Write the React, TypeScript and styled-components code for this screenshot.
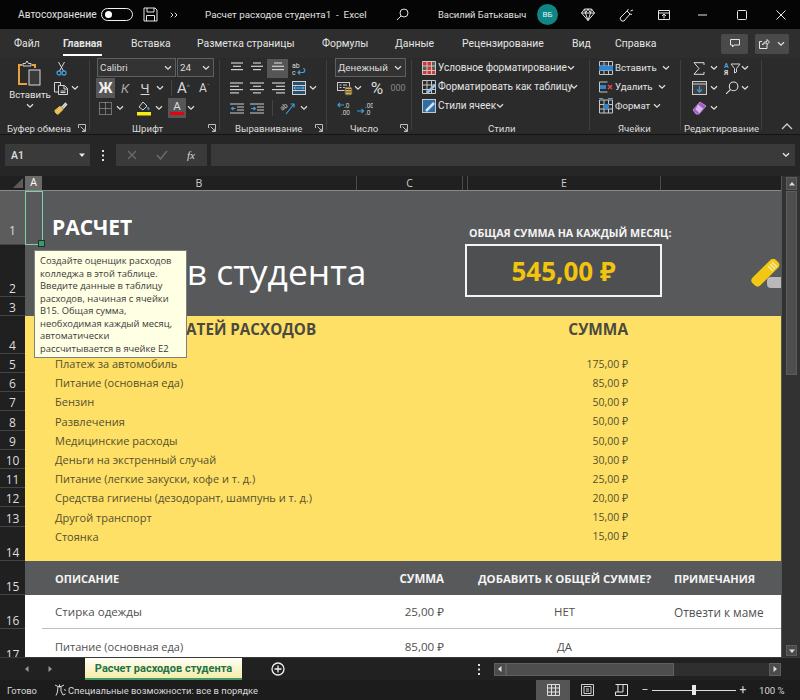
import React from "react";
import styled, { createGlobalStyle } from "styled-components";

const UI = `"Roboto", "Open Sans", sans-serif`;
const SHEET = `"Open Sans", "Noto Sans", sans-serif`;

const Global = createGlobalStyle`
  html, body { margin: 0; padding: 0; background: #262626; }
  * { box-sizing: border-box; }
`;

const Page = styled.div`
  width: 800px; height: 700px; overflow: hidden; display: flex; flex-direction: column;
  font-family: ${UI}; color: #e4e4e4; background: #262626;
`;

/* ---------- shared bits ---------- */
const Svg = styled.svg`display: block; flex: none; fill: none; stroke: #d4d4d4; stroke-width: 1;`;
const Slot = styled.div<{ $w: number; $on?: boolean; $ml?: number }>`
  width: ${(p) => p.$w}px; height: 100%; flex: none; display: flex; align-items: center; justify-content: center;
  margin-left: ${(p) => p.$ml ?? 0}px;
  background: ${(p) => (p.$on ? "#565656" : "transparent")};
`;
const Chev = ({ c = "#dcdcdc" }: { c?: string }) => (
  <Svg width="8" height="6" viewBox="0 0 8 6" style={{ stroke: c, strokeWidth: 1.3 }}><path d="M1 1.2l3 3 3-3" /></Svg>
);

/* ---------- title bar ---------- */
const TitleBar = styled.div`
  height: 29px; background: #050505; display: flex; align-items: center; padding-left: 18px; flex: none;
`;
const TitleText = styled.div<{ $w: number; $ml?: number; $s?: number }>`
  width: ${(p) => p.$w}px; margin-left: ${(p) => p.$ml ?? 0}px; flex: none; font-size: ${(p) => p.$s ?? 10.5}px; white-space: pre; color: #e0e0e0;
`;
const Toggle = styled.div`
  width: 32px; height: 13px; border: 1px solid #f2f2f2; border-radius: 7px; padding: 2px 3px; flex: none;
  &::before { content: ""; display: block; width: 7px; height: 7px; border-radius: 50%; background: #fff; }
`;
const Avatar = styled.div`
  width: 21px; height: 21px; border-radius: 50%; background: #0f8686; color: #e6f5f5; font-size: 8px; flex: none;
  display: flex; align-items: center; justify-content: center; margin-left: 9px;
`;

/* ---------- tabs ---------- */
const TabRow = styled.div`
  height: 29px; background: #2e2e2e; display: flex; align-items: center; padding-left: 14px; flex: none;
`;
const Tab = styled.div<{ $w: number; $on?: boolean }>`
  width: ${(p) => p.$w}px; flex: none; font-size: 10.4px; height: 100%; display: flex; align-items: center; padding-bottom: 1px;
  color: #e4e4e4; font-weight: ${(p) => (p.$on ? 700 : 400)};
  & > span { position: relative; }
  ${(p) => p.$on && `& > span::after { content: ""; position: absolute; left: 0; right: 0; bottom: -6px; height: 2px; background: #fff; }`}
`;
const TabTools = styled.div`margin-left: auto; display: flex; gap: 7px; padding-right: 11px;`;
const ToolBtn = styled.div<{ $w: number }>`
  width: ${(p) => p.$w}px; height: 20px; background: #4a4a4a; border-radius: 2px; display: flex; align-items: center; justify-content: center; gap: 7px;
`;

/* ---------- ribbon ---------- */
const Ribbon = styled.div`
  height: 77px; background: #2b2b2b; display: flex; flex: none; border-bottom: 1px solid #141414;
`;
const Group = styled.div<{ $w: number }>`
  width: ${(p) => p.$w}px; flex: none; display: flex; flex-direction: column; position: relative;
  &::after { content: ""; position: absolute; right: 0; top: 2px; bottom: 4px; width: 1px; background: #3f3f3f; }
`;
const Body = styled.div<{ $pl?: number }>`
  height: 60px; flex: none; padding-left: ${(p) => p.$pl ?? 0}px; display: flex; flex-direction: column;
`;
const IconRow = styled.div<{ $pl?: number }>`height: 20px; display: flex; align-items: center; padding-left: ${(p) => p.$pl ?? 0}px;`;
const Foot = styled.div<{ $pl: number }>`
  flex: 1; display: flex; align-items: center; padding: 4px 3px 0 ${(p) => p.$pl}px; font-size: 9.6px; color: #dcdcdc; justify-content: space-between; white-space: nowrap;
`;
const Launch = () => (
  <Svg width="8" height="8" viewBox="0 0 8 8" style={{ stroke: "#bdbdbd", marginRight: 1 }}><path d="M.5 4V.5H7.5V7.5H4M2.500 2.500L7 7M7 4.500V7H4.500" /></Svg>
);
const Combo = styled.div<{ $w: number }>`
  width: ${(p) => p.$w}px; height: 19px; border: 1px solid #5f5f5f; background: #333; display: flex; align-items: center; justify-content: space-between;
  padding: 0 3px 0 2px; font-size: 9.8px; color: #dedede; flex: none;
`;
const ComboRow = styled.div`display: flex; gap: 1px; height: 20px;`;
const Fmt = styled.span<{ $b?: boolean; $i?: boolean; $u?: boolean; $s?: number; $c?: string }>`
  font-size: ${(p) => p.$s ?? 13}px; font-weight: ${(p) => (p.$b ? 700 : 400)}; font-style: ${(p) => (p.$i ? "italic" : "normal")};
  text-decoration: ${(p) => (p.$u ? "underline" : "none")}; color: ${(p) => p.$c ?? "#d8d8d8"}; line-height: 1;
`;
const VRule = styled.div`width: 1px; height: 16px; background: #444; flex: none;`;
const PasteBlock = styled.div`display: flex; height: 60px;`;
const PasteCol = styled.div`
  width: 50px; margin-left: 5px; padding-top: 2px; display: flex; flex-direction: column; align-items: center; font-size: 9.6px; color: #e4e4e4;
  & > span { line-height: 13px; }
  & > svg:last-child { margin-top: 2px; }
`;
const SmallCol = styled.div`display: flex; flex-direction: column; margin-left: -1px;`;
const CmdRow = styled.div<{ $pl: number; $s: number }>`
  height: 19px; display: flex; align-items: center; padding-left: ${(p) => p.$pl}px; font-size: ${(p) => p.$s}px; color: #e4e4e4; white-space: nowrap; gap: 0;
  & > svg:first-child { margin-right: 2px; }
`;
const CmdLabel = styled.span<{ $w: number }>`width: ${(p) => p.$w}px; flex: none; margin-right: 3px;`;
const ColorA = styled.div<{ $c: string }>`
  display: flex; flex-direction: column; align-items: center; font-size: 11.5px; line-height: 11px; color: #ddd;
  &::after { content: ""; width: 14px; height: 3px; background: ${(p) => p.$c}; margin-top: 0; }
`;
const GrowEnd = styled.div`flex: 1; display: flex; align-items: flex-end; justify-content: flex-end; padding: 0 7px 4px 0;`;

/* ---------- formula bar ---------- */
const FormulaZone = styled.div`
  height: 41px; padding: 9px 5px 10px 5px; display: flex; flex: none; background: #262626; align-items: stretch;
`;
const NameBox = styled.div`
  width: 85px; background: #3a3a3a; display: flex; align-items: center; justify-content: space-between; padding: 0 4px 0 6px;
  font-size: 10.5px; font-weight: 500; color: #e0e0e0;
`;
const Kebab = styled.div`width: 26px; display: flex; align-items: center; justify-content: center;`;
const FxBox = styled.div`width: 91px; background: #3a3a3a; display: flex; align-items: center; padding-left: 11px; gap: 19px;`;
const FxLabel = styled.span`font: italic 11px "Liberation Serif", serif; color: #dcdcdc;`;
const FormulaInput = styled.div`
  flex: 1; background: #3a3a3a; margin-left: 4px; display: flex; align-items: center; justify-content: flex-end; padding-right: 5px;
`;

/* ---------- sheet ---------- */
const cols = "25px 17px 315px 106px 5px 193px 120px";
const Main = styled.div`height: 481px; display: flex; flex: none;`;
const SheetArea = styled.div`width: 781px; height: 481px; overflow: hidden; position: relative; flex: none; background: #1f1f1f; font-family: ${SHEET};`;
const ColHeads = styled.div`
  display: grid; grid-template-columns: ${cols}; height: 15px; background: #202020; border-bottom: 1px solid #8a8a8a;
`;
const Corner = styled.div`display: flex; align-items: flex-end; justify-content: flex-end; padding: 0 2px 2px 0;`;
const ColHead = styled.div<{ $on?: boolean; $noRule?: boolean }>`
  display: flex; align-items: center; justify-content: center; font-size: 10.5px; color: ${(p) => (p.$on ? "#fff" : "#cfcfcf")};
  background: ${(p) => (p.$on ? "#6a6a6a" : "transparent")}; ${(p) => p.$noRule ? "" : "border-right: 1px solid #4a4a4a;"}
  margin-top: ${(p) => (p.$on ? "-2px" : "0")};
`;
const SheetRow = styled.div<{ $h: number; $bg: string; $rule?: boolean }>`
  display: grid; grid-template-columns: ${cols}; height: ${(p) => p.$h}px; background: ${(p) => p.$bg};
  ${(p) => p.$rule && `& > div:nth-child(n+3) { border-bottom: 1px solid #bdbdbd; }`}
`;
const RowHead = styled.div<{ $on?: boolean }>`
  background: ${(p) => (p.$on ? "#5c5c5c" : "#202020")}; color: #dedede; font-size: 12px; line-height: 14px;
  display: flex; align-items: flex-end; justify-content: center; padding-bottom: ${(p) => (p.$on ? "6px" : "0")}; border-bottom: 1px solid #444;
`;
const Cell = styled.div<{ $side?: string; $v?: string; $pl?: number; $pr?: number; $c?: string; $b?: boolean; $s?: number; $pb?: number; $pt?: number }>`
  display: flex; white-space: nowrap; font-size: ${(p) => p.$s ?? 11}px; font-weight: ${(p) => (p.$b ? 700 : 400)};
  justify-content: ${(p) => p.$side ?? "flex-start"}; align-items: ${(p) => p.$v ?? "center"};
  padding: ${(p) => p.$pt ?? 0}px ${(p) => p.$pr ?? 0}px ${(p) => p.$pb ?? 0}px ${(p) => p.$pl ?? 0}px;
  color: ${(p) => p.$c ?? "#54502f"};
`;
const TotalBox = styled.div`
  margin: -1px -1px 0 -3px; border: 2px solid #f4f4f4; background: #4e4f51; color: #f2c40f; font-size: 26px; font-weight: 700;
  display: flex; align-items: center; justify-content: center;
`;
const Tooltip = styled.div`
  position: absolute; left: 34px; top: 74px; width: 153px; height: 108px; background: #ffffe3; border: 1px solid #808080;
  padding: 4px 0 0 5px; color: #3a3a3a; font-size: 9.4px; line-height: 12.5px; z-index: 3;
  & > div { white-space: nowrap; }
`;
const Selection = styled.div`
  position: absolute; left: 25px; top: 15px; width: 18px; height: 54px; border: 1.5px solid #7fd0a6; z-index: 2;
  &::after { content: ""; position: absolute; right: -3px; bottom: -3px; width: 5px; height: 5px; background: #2f9e6c; border: 1px solid #2b2b2b; }
`;

/* ---------- scrollbar ---------- */
const VScroll = styled.div`
  width: 19px; height: 481px; flex: none; background: #323232; padding: 1px 3px 0 4px; display: flex; flex-direction: column; border-left: 1px solid #555;
`;
const ScrollBtn = styled.div<{ $w?: number; $h?: number }>`
  width: ${(p) => (p.$w ? `${p.$w}px` : "100%")}; height: ${(p) => (p.$h ? `${p.$h}px` : "100%")}; background: #4b4b4b; border: 1px solid #5e5e5e; flex: none;
  display: flex; align-items: center; justify-content: center;
`;
const VThumb = styled.div`height: 184px; margin-top: 1px; background: #4e4e4e; border: 1px solid #5c5c5c; flex: none;`;
const Fill = styled.div`flex: 1;`;

/* ---------- bottom ---------- */
const SheetTabs = styled.div`
  height: 23px; background: #212121; display: flex; align-items: center; flex: none; border-top: 1px solid #3a3a3a; padding-left: 23px;
`;
const SheetTab = styled.div`
  width: 157px; height: 100%; margin-left: 31px; background: linear-gradient(#fffff6, #f5ecaa); color: #1f7245; font-size: 11px; font-weight: 700;
  display: flex; align-items: center; justify-content: center; border-bottom: 2px solid #3f9a68; flex: none;
`;
const HScroll = styled.div`
  margin-left: 13px; width: 287px; height: 13px; background: #2f2f2f; display: flex; flex: none;
`;
const HThumb = styled.div`width: 168px; background: #4e4e4e; border: 1px solid #606060; flex: none;`;
const StatusBar = styled.div`
  height: 20px; background: #1c1c1c; display: flex; align-items: center; font-size: 9.4px; color: #d8d8d8; padding-left: 7px; flex: none; white-space: nowrap;
`;
const ViewBtn = styled.div<{ $on?: boolean }>`
  width: 34px; height: 100%; display: flex; align-items: center; justify-content: center; flex: none; background: ${(p) => (p.$on ? "#555" : "transparent")};
`;
const Zoom = styled.div`display: flex; align-items: center; height: 100%; flex: none; font-size: 12px;`;
const Track = styled.div`
  width: 84px; height: 1px; background: #ddd; display: flex; justify-content: center; align-items: center;
  &::before { content: ""; width: 4px; height: 10px; background: #e8e8e8; }
`;
const Percent = styled.span`width: 50px; padding-left: 9px; flex: none; font-size: 9.6px;`;

/* ---------- icons ---------- */
const blue = "#3f9bd8";
const Save = () => (
  <Svg width="15" height="15" viewBox="0 0 15 15" style={{ stroke: "#e6e6e6" }}><path d="M1 1h11l2 2v11H1zM4 1v4h7V1M3.5 14V8.5h8V14" /></Svg>
);
const More = () => (
  <Svg width="8" height="6" viewBox="0 0 8 6" style={{ stroke: "#ddd" }}><path d="M.7.7L3 3 .7 5.3M4.7.7L7 3 4.7 5.3" /></Svg>
);
const Search = ({ s = 13 }: { s?: number }) => (
  <Svg width={s} height={s} viewBox="0 0 13 13" style={{ stroke: "#e0e0e0" }}><circle cx="8" cy="5" r="4" /><path d="M5 8l-4 4" /></Svg>
);
const Diamond = () => (
  <Svg width="14" height="13" viewBox="0 0 14 13" style={{ stroke: "#e8e8e8" }}><path d="M3.5 1h7L13.5 5 7 12.5.5 5zM.5 5h13M4.5 5L7 12.5 9.5 5M3.5 1l1 4 2.5-4 2.5 4 1-4" /></Svg>
);
const Pen = () => (
  <Svg width="15" height="15" viewBox="0 0 15 15" style={{ stroke: "#e4e4e4" }}><path d="M1 11l7-7 3 3-6 7H2.500zM8 4l1.500-2M11.500 4L14 3M11 7l2 .5" /></Svg>
);
const Display = () => (
  <Svg width="12" height="10" viewBox="0 0 12 10" style={{ stroke: "#e4e4e4" }}><path d="M.5.5h11v9H.5zM.5 3h11M6 8.500V4.500M4 6l2-2 2 2" /></Svg>
);
const WinMin = () => (<Svg width="10" height="2" viewBox="0 0 10 2" style={{ stroke: "#e4e4e4" }}><path d="M0 1h9" /></Svg>);
const WinMax = () => (<Svg width="10" height="10" viewBox="0 0 10 10" style={{ stroke: "#e8e8e8" }}><rect x=".5" y=".5" width="9" height="9" rx="1" /></Svg>);
const WinClose = () => (<Svg width="10" height="10" viewBox="0 0 10 10" style={{ stroke: "#e8e8e8" }}><path d="M.5.5l9 9M9.500.5l-9 9" /></Svg>);
const Comment = () => (<Svg width="10" height="9" viewBox="0 0 10 9" style={{ stroke: "#e4e4e4" }}><path d="M.5.5h9v5.500H4L2.500 8V6H.5z" /></Svg>);
const Share = () => (<Svg width="11" height="11" viewBox="0 0 11 11" style={{ stroke: "#e4e4e4" }}><path d="M8 6.500v4H.5V3.500H3M3.500 7C4 4.500 6 3.500 8 3.500V1.500l2.500 2.700L8 6.500V5C6 5 4.500 5.500 3.500 7z" /></Svg>);
const Paste = () => (
  <Svg width="24" height="28" viewBox="0 0 24 28">
    <path d="M4 5H1v19h8" stroke="#e6a23c" strokeWidth="2" />
    <path d="M14 5h3v3" stroke="#e6a23c" strokeWidth="2" />
    <path d="M5 6V3.500h2.500L9 1l1.500 2.500H13V6z" stroke="#d8d8d8" />
    <rect x="11" y="10" width="11" height="15" stroke="#d8d8d8" fill="#3a3a3a" />
  </Svg>
);
const Cut = () => (
  <Svg width="11" height="15" viewBox="0 0 11 15">
    <path d="M2.500 1l5 9M8.500 1l-5 9" stroke="#d8d8d8" />
    <circle cx="3" cy="12" r="2" stroke={blue} strokeWidth="1.300" /><circle cx="8" cy="12" r="2" stroke={blue} strokeWidth="1.300" />
  </Svg>
);
const CopyIc = () => (
  <Svg width="14" height="13" viewBox="0 0 14 13"><path d="M4 10H.5V.5h6V3" /><path d="M4.500 3.500h6l3 3v6h-9zM10 3.500V7h3.500M6.500 9h5M6.500 10.500h5" /></Svg>
);
const Painter = () => (
  <Svg width="14" height="14" viewBox="0 0 14 14">
    <path d="M.8 9.500L6 5.300 9 8.500 4 13.300C2.500 13 1 11.500.8 9.500z" fill="#e8c15a" stroke="#e8c15a" />
    <path d="M7.500 6.500L12 1.800M9 7.500l4-4.500" stroke="#ddd" strokeWidth="1.500" />
  </Svg>
);
const Borders = () => (
  <Svg width="13" height="13" viewBox="0 0 13 13" style={{ stroke: "#bbb" }} strokeDasharray="1 1"><path d="M.5.5h12v12H.500zM6.500.5v12M.5 6.500h12" /></Svg>
);
const FillIc = () => (
  <Svg width="14" height="16" viewBox="0 0 14 16">
    <path d="M2 7l4-5 4 4-4 4z" />
    <path d="M11 7c1 1.300 1.500 2 1 2.500s-2 0-1-2.500z" fill={blue} stroke={blue} />
    <rect x="0" y="12" width="14" height="3.500" fill="#f7ec13" stroke="none" />
  </Svg>
);
const Lines = ({ rows }: { rows: [number, number][] }) => (
  <Svg width="14" height="12" viewBox="0 0 14 12" style={{ stroke: "#cfcfcf", strokeWidth: 1.200 }}>
    {rows.map(([a, b], i) => <path key={i} d={`M${a} ${1 + i * 3.300}H${b}`} />)}
  </Svg>
);
const Wrap = () => (
  <Svg width="14" height="15" viewBox="0 0 14 15">
    <text x="0" y="6.500" fontSize="7" fontFamily={UI} fill="#ddd" stroke="none">ab</text>
    <text x="0" y="14" fontSize="7" fontFamily={UI} fill="#ddd" stroke="none">c</text>
    <path d="M11 7.500c2.500 0 2.500 4-.5 4H6M8 9.500l-2 2 2 2" stroke={blue} strokeWidth="1.200" />
  </Svg>
);
const Merge = () => (
  <Svg width="14" height="14" viewBox="0 0 14 14">
    <rect x=".5" y=".5" width="13" height="13" stroke="#d0d0d0" fill="#27506e" />
    <path d="M1 4.500h12M1 9.500h12" stroke="#d0d0d0" />
    <path d="M1.500 7H12.500M3.500 5.500L2 7l1.500 1.500M10.500 5.500L12 7l-1.500 1.500" stroke="#5fb5f0" />
  </Svg>
);
const Indent = ({ flip }: { flip?: boolean }) => (
  <Svg width="14" height="11" viewBox="0 0 14 11" style={{ stroke: "#cfcfcf" }}>
    <path d="M0 1h14M7 4h7M7 7h7M0 10h14" />
    <path d={flip ? "M1 5.500h4M3.500 4L5.500 5.500 3.500 7" : "M1.500 5.500h4M3.500 4L1.500 5.500 3.500 7"} stroke={blue} strokeWidth="1.200" />
  </Svg>
);
const Orient = () => (
  <Svg width="16" height="14" viewBox="0 0 16 14">
    <text x="0" y="8" fontSize="7" fontFamily={UI} fill="#ccc" stroke="none" transform="rotate(-40 4 6)">ab</text>
    <path d="M6 13L14 3M10.500 3H14v3.500" stroke={blue} strokeWidth="1.200" />
  </Svg>
);
const Money = () => (
  <Svg width="17" height="15" viewBox="0 0 17 15">
    <rect x=".5" y="1.500" width="12" height="8" stroke="#ccc" /><path d="M2.500 4h2M2.500 6.500h2M6 4h4M6 6.500h4" stroke="#ccc" />
    <rect x="8" y="6" width="7" height="8" rx="1.500" fill="#d8b04a" stroke="#444" /><path d="M9 8.500h5M9 11h5" stroke="#444" />
  </Svg>
);
const Dec = ({ inc }: { inc?: boolean }) => (
  <Svg width="16" height="15" viewBox="0 0 16 15">
    <text x={inc ? "8" : "7"} y="6.500" fontSize="6.500" fontFamily={UI} fill="#d0d0d0" stroke="none">{inc ? ".00" : ".0"}</text>
    <text x={inc ? "8" : "4"} y="14" fontSize="6.500" fontFamily={UI} fill="#d0d0d0" stroke="none">{inc ? ".0" : ".00"}</text>
    <path d={inc ? "M0 10h6.500M4.500 8l2 2-2 2" : "M1 4h6M3 2L1 4l2 2"} stroke={blue} strokeWidth="1.200" />
  </Svg>
);
const GridBase = () => (<path d="M.5.5h13v13H.5zM.5 5h13M.5 9.500h13M5 .5v13M9.500.5v13" stroke="#c6c6c6" />);
const CondFmt = () => (
  <Svg width="14" height="14" viewBox="0 0 14 14"><rect width="14" height="14" fill="#5a5a5a" stroke="none" /><rect x="1" y="1" width="8" height="3.500" fill="#d9352f" stroke="none" /><rect x="5" y="5.500" width="4" height="3.500" fill="#d9352f" stroke="none" /><rect x="1" y="10" width="12" height="3" fill="#d9352f" stroke="none" /><GridBase /></Svg>
);
const TableFmt = () => (
  <Svg width="14" height="14" viewBox="0 0 14 14"><GridBase /><path d="M5 13l8-8" stroke="#8fc4ef" strokeWidth="2.500" /></Svg>
);
const CellStyle = () => (
  <Svg width="14" height="14" viewBox="0 0 14 14"><rect x=".5" y=".5" width="13" height="13" fill="#2f6ea3" stroke="#c6c6c6" /><path d="M4 12l8-8" stroke="#cfe3f4" strokeWidth="2.500" /></Svg>
);
const InsertIc = () => (
  <Svg width="14" height="14" viewBox="0 0 14 14"><GridBase /><rect x="0" y="5" width="14" height="4.500" fill="#2f86d0" stroke="none" /><path d="M4 2v3M7 2v3" stroke="#2f86d0" /></Svg>
);
const DeleteIc = () => (
  <Svg width="14" height="14" viewBox="0 0 14 14"><path d="M.5 2h8M.5 12h8M.5 2v10" stroke="#c6c6c6" /><rect x="1" y="5" width="6" height="4" fill="#2f86d0" stroke="none" /><path d="M9 5l4 4M13 5l-4 4" stroke="#e04a3f" strokeWidth="1.500" /></Svg>
);
const FormatIc = () => (
  <Svg width="14" height="16" viewBox="0 0 14 15"><g transform="translate(0 1)"><GridBase /></g><rect x="5" y="5.500" width="5" height="5" fill="#2f86d0" stroke="none" /><path d="M0 0h4M9 0h5" stroke="#4aa0e0" /></Svg>
);
const Sigma = () => (<Svg width="12" height="13" viewBox="0 0 12 13" style={{ stroke: "#dcdcdc" }}><path d="M11 3V.7H1L6 6.500 1 12.300H11V10" /></Svg>);
const SortIc = () => (
  <Svg width="17" height="15" viewBox="0 0 17 15">
    <text x="0" y="6.500" fontSize="7" fontWeight="700" fontFamily={UI} fill="#4aa0e0" stroke="none">А</text>
    <text x="0" y="14" fontSize="7" fontWeight="700" fontFamily={UI} fill="#ddd" stroke="none">Я</text>
    <path d="M7 3h9l-3.500 4.500V11l-2 1V7.500z" />
  </Svg>
);
const FillDown = () => (<Svg width="15" height="14" viewBox="0 0 15 14"><rect x=".5" y=".5" width="14" height="13" fill="#3f3f3f" stroke="#ccc" /><path d="M.5 3h14" stroke="#ccc" /><path d="M7.500 5v6M5 8.500l2.500 2.500L10 8.500" stroke={blue} strokeWidth="1.300" /></Svg>);
const Eraser = () => (<Svg width="15" height="14" viewBox="0 0 15 14"><path d="M1 9l7-8 6 4-7 8H4z" fill="#a45ec4" stroke="#c084dc" /><path d="M6 3.500l5 4-3.500 4.500-4-3.500z" fill="#d9b6e8" stroke="none" /></Svg>);
const Band = () => (
  <Svg width="30" height="30" viewBox="0 0 30 30" style={{ stroke: "none" }}>
    <rect x="-2" y="-5.500" width="33" height="11" rx="4" fill="#f3c814" transform="translate(0 14) rotate(-45 14 0) translate(0 0)" />
    <rect x="16" y="18" width="18" height="11" rx="4" fill="#b9b9b9" />
    <path d="M17 7l5 5M19 5l5 5M21 3l5 5" stroke="#f7ecb0" strokeWidth="1.500" />
  </Svg>
);
const BandCell = styled.div`display: flex; align-items: flex-end; justify-content: flex-end; overflow: hidden; padding-bottom: 8px;`;
const Tri = ({ d, c = "#ddd" }: { d: "l" | "r" | "u" | "d"; c?: string }) => (
  <Svg width="8" height="8" viewBox="0 0 8 8" style={{ stroke: "none", fill: c }}>
    <path d={{ l: "M5.500 1v6L2 4z", r: "M2.500 1v6L6 4z", u: "M1 5.500h6L4 2z", d: "M1 2.500h6L4 6z" }[d]} />
  </Svg>
);
const Dots = () => (<Svg width="3" height="11" viewBox="0 0 3 11" style={{ stroke: "none", fill: "#e0e0e0" }}><rect y="0" width="2" height="2" /><rect y="4.500" width="2" height="2" /><rect y="9" width="2" height="2" /></Svg>);

const Plus = () => (<Svg width="14" height="14" viewBox="0 0 14 14" style={{ stroke: "#f0f0f0", strokeWidth: 1.300 }}><circle cx="7" cy="7" r="6" /><path d="M7 3.500v7M3.500 7h7" /></Svg>);
const Access = () => (<Svg width="13" height="13" viewBox="0 0 13 13" style={{ stroke: "#d8d8d8" }}><path d="M1 1l3 1.500h3L10 1M5.500 .5v3M4 2.500L3.500 8 2 11.500M7 2.500L7 7l2 4 2.500-1M10 5.500l2 1" /></Svg>);
const GridView = () => (<Svg width="13" height="12" viewBox="0 0 13 12" style={{ stroke: "#e0e0e0" }}><path d="M.5.5h12v11H.5zM4.500.5v11M8.500.5v11M.5 4h12M.5 8h12" /></Svg>);
const PageView = () => (<Svg width="13" height="12" viewBox="0 0 13 12" style={{ stroke: "#d0d0d0" }}><path d="M.5.5h12v11H.5zM3 2.500h7v7H3zM5 5h3M5 7h3" /></Svg>);
const BreakView = () => (<Svg width="13" height="12" viewBox="0 0 13 12" style={{ stroke: "#e0e0e0" }}><path d="M.5.5h12v11H.5V8H8V.5M3 .5V8" /></Svg>);

/* ---------- data ---------- */
const tabs: [string, number][] = [["Файл", 49], ["Главная", 68], ["Вставка", 66], ["Разметка страницы", 125], ["Формулы", 73], ["Данные", 67], ["Рецензирование", 110], ["Вид", 43], ["Справка", 60]];
const items: [string, string][] = [
  ["Платеж за автомобиль", "175,00 ₽"], ["Питание (основная еда)", "85,00 ₽"], ["Бензин", "50,00 ₽"], ["Развлечения", "50,00 ₽"],
  ["Медицинские расходы", "50,00 ₽"], ["Деньги на экстренный случай", "30,00 ₽"], ["Питание (легкие закуски, кофе и т. д.)", "25,00 ₽"],
  ["Средства гигиены (дезодорант, шампунь и т. д.)", "20,00 ₽"], ["Другой транспорт", "15,00 ₽"],
];
const heights = [19, 19, 19, 20, 19, 19, 19, 19, 20];
const tipLines = ["Создайте оценщик расходов", "колледжа в этой таблице.", "Введите данные в таблицу", "расходов, начиная с ячейки", "B15. Общая сумма,", "необходимая каждый месяц,", "автоматически", "рассчитывается в ячейке E2"];
const GREY = "#58595b", YEL = "#ffe066", WHITE = "#ffffff", TXT = "#505050";

export default function App() {
  return (
    <Page>
      <Global />
      <TitleBar>
        <TitleText $w={83} $s={10.2}>Автосохранение</TitleText>
        <Toggle />
        <Slot $w={34}><Save /></Slot>
        <Slot $w={14}><More /></Slot>
        <TitleText $w={184} $ml={24} $s={9.8}>Расчет расходов студента1  -  Excel</TitleText>
        <Slot $w={26}><Search /></Slot>
        <TitleText $w={90} $ml={23} $s={9.4}>Василий Батькавыч</TitleText>
        <Avatar>ВБ</Avatar>
        <Slot $w={39} $ml={10}><Diamond /></Slot>
        <Slot $w={38}><Pen /></Slot>
        <Slot $w={38}><Display /></Slot>
        <Slot $w={39}><WinMin /></Slot>
        <Slot $w={39}><WinMax /></Slot>
        <Slot $w={39}><WinClose /></Slot>
      </TitleBar>

      <TabRow>
        {tabs.map(([t, w]) => <Tab key={t} $w={w} $on={t === "Главная"}><span>{t}</span></Tab>)}
        <TabTools>
          <ToolBtn $w={27}><Comment /></ToolBtn>
          <ToolBtn $w={34}><Share /><Chev /></ToolBtn>
        </TabTools>
      </TabRow>

      <Ribbon>
        <Group $w={90}>
          <Body>
            <PasteBlock>
              <PasteCol><Paste /><span>Вставить</span><Chev /></PasteCol>
              <SmallCol>
                <IconRow $pl={2}><Cut /></IconRow>
                <IconRow><CopyIc /><Slot $w={14}><Chev /></Slot></IconRow>
                <IconRow><Painter /></IconRow>
              </SmallCol>
            </PasteBlock>
          </Body>
          <Foot $pl={7}><span>Буфер обмена</span><Launch /></Foot>
        </Group>

        <Group $w={130}>
          <Body $pl={7}>
            <ComboRow><Combo $w={79}>Calibri<Chev /></Combo><Combo $w={37}>24<Chev /></Combo></ComboRow>
            <IconRow style={{ marginLeft: -1 }}>
              <Slot $w={19} $on><Fmt $b $s={14} $c="#f0f0f0">Ж</Fmt></Slot>
              <Slot $w={20}><Fmt $i $s={13} $c="#aaa">К</Fmt></Slot>
              <Slot $w={20}><Fmt $u $s={13}>Ч</Fmt></Slot>
              <Slot $w={10}><Chev /></Slot>
              <Slot $w={6} /><VRule />
              <Slot $w={1} /><Slot $w={21}><Fmt $s={15}>A</Fmt><Fmt $s={8} $c={blue}>^</Fmt></Slot>
              <Slot $w={21}><Fmt $s={12}>A</Fmt><Fmt $s={7} $c={blue}>ˇ</Fmt></Slot>
            </IconRow>
            <IconRow style={{ marginLeft: -1 }}>
              <Slot $w={19}><Borders /></Slot>
              <Slot $w={10}><Chev /></Slot>
              <Slot $w={9} />
              <Slot $w={20}><FillIc /></Slot>
              <Slot $w={10}><Chev /></Slot>
              <Slot $w={4} />
              <Slot $w={18} $on><ColorA $c="#e8000f">A</ColorA></Slot>
              <Slot $w={10}><Chev /></Slot>
            </IconRow>
          </Body>
          <Foot $pl={42}><span>Шрифт</span><Launch /></Foot>
        </Group>

        <Group $w={107}>
          <Body $pl={7}>
            <IconRow>
              <Slot $w={20}><Lines rows={[[1, 13], [3, 11], [1, 13]]} /></Slot>
              <Slot $w={20}><Lines rows={[[3, 11], [1, 13], [3, 11]]} /></Slot>
              <Slot $w={21} $on style={{ height: 19 }}><Lines rows={[[3, 11], [1, 13], [1, 13]]} /></Slot>
              <Slot $w={21}><Wrap /></Slot>
            </IconRow>
            <IconRow>
              <Slot $w={20}><Lines rows={[[0, 13], [0, 9], [0, 13], [0, 9]]} /></Slot>
              <Slot $w={20}><Lines rows={[[0, 14], [3, 11], [0, 14], [3, 11]]} /></Slot>
              <Slot $w={21}><Lines rows={[[1, 14], [5, 14], [1, 14], [5, 14]]} /></Slot>
              <Slot $w={21}><Merge /></Slot>
              <Slot $w={8}><Chev /></Slot>
            </IconRow>
            <IconRow>
              <Slot $w={20}><Indent /></Slot>
              <Slot $w={20}><Indent flip /></Slot>
              <Slot $w={5} /><VRule />
              <Slot $w={4} /><Slot $w={22}><Orient /></Slot>
              <Slot $w={10}><Chev /></Slot>
            </IconRow>
          </Body>
          <Foot $pl={15}><span>Выравнивание</span><Launch /></Foot>
        </Group>

        <Group $w={85}>
          <Body $pl={8}>
            <ComboRow><Combo $w={71}>Денежный<Chev /></Combo></ComboRow>
            <IconRow>
              <Slot $w={20}><Money /></Slot>
              <Slot $w={6}><Chev /></Slot>
              <Slot $w={28} $ml={2}><Fmt $s={17}>%</Fmt></Slot>
              <Slot $w={14}><Fmt $s={9} $c="#888">000</Fmt></Slot>
            </IconRow>
            <IconRow>
              <Slot $w={20}><Dec /></Slot>
              <Slot $w={20}><Dec inc /></Slot>
            </IconRow>
          </Body>
          <Foot $pl={23}><span>Число</span><Launch /></Foot>
        </Group>

        <Group $w={178}>
          <Body>
            <CmdRow $pl={10} $s={10}><CondFmt /><CmdLabel $w={126}>Условное форматирование</CmdLabel><Chev /></CmdRow>
            <CmdRow $pl={10} $s={10}><TableFmt /><CmdLabel $w={129}>Форматировать как таблицу</CmdLabel><Chev /></CmdRow>
            <CmdRow $pl={10} $s={10}><CellStyle /><CmdLabel $w={55}>Стили ячеек</CmdLabel><Chev /></CmdRow>
          </Body>
          <Foot $pl={76}><span>Стили</span></Foot>
        </Group>

        <Group $w={91}>
          <Body>
            <CmdRow $pl={9} $s={9.6}><InsertIc /><CmdLabel $w={44}>Вставить</CmdLabel><Chev /></CmdRow>
            <CmdRow $pl={9} $s={9.6}><DeleteIc /><CmdLabel $w={40}>Удалить</CmdLabel><Chev /></CmdRow>
            <CmdRow $pl={9} $s={9.6}><FormatIc /><CmdLabel $w={35}>Формат</CmdLabel><Chev /></CmdRow>
          </Body>
          <Foot $pl={28}><span>Ячейки</span></Foot>
        </Group>

        <Group $w={81}>
          <Body>
            <IconRow $pl={8}>
              <Slot $w={20}><Sigma /></Slot><Slot $w={10}><Chev /></Slot>
              <Slot $w={18} $ml={4}><SortIc /></Slot><Slot $w={8}><Chev /></Slot>
            </IconRow>
            <IconRow $pl={8}>
              <Slot $w={20}><FillDown /></Slot><Slot $w={10}><Chev /></Slot>
              <Slot $w={18} $ml={4}><Search s={14} /></Slot><Slot $w={8}><Chev /></Slot>
            </IconRow>
            <IconRow $pl={8}>
              <Slot $w={20}><Eraser /></Slot><Slot $w={10}><Chev /></Slot>
            </IconRow>
          </Body>
          <Foot $pl={3}><span>Редактирование</span></Foot>
        </Group>
        <GrowEnd>
          <Svg width="12" height="7" viewBox="0 0 12 7" style={{ stroke: "#cfcfcf", strokeWidth: 1.300 }}><path d="M1 6l5-5 5 5" /></Svg>
        </GrowEnd>
      </Ribbon>

      <FormulaZone>
        <NameBox>A1<Tri d="d" c="#e8e8e8" /></NameBox>
        <Kebab><Dots /></Kebab>
        <FxBox>
          <Svg width="10" height="10" viewBox="0 0 10 10" style={{ stroke: "#6b6b6b", strokeWidth: 1.300 }}><path d="M1 1l8 8M9 1l-8 8" /></Svg>
          <Svg width="12" height="10" viewBox="0 0 12 10" style={{ stroke: "#6b6b6b", strokeWidth: 1.500 }}><path d="M1 5l3.500 4L11 1" /></Svg>
          <FxLabel>fx</FxLabel>
        </FxBox>
        <FormulaInput><Chev c="#f0f0f0" /></FormulaInput>
      </FormulaZone>

      <Main>
        <SheetArea>
          <ColHeads>
            <Corner><Svg width="10" height="10" viewBox="0 0 10 10" style={{ stroke: "none", fill: "#5a5a5a" }}><path d="M10 0v10H0z" /></Svg></Corner>
            <ColHead $on $noRule>A</ColHead>
            <ColHead>B</ColHead>
            <ColHead>C</ColHead>
            <ColHead />
            <ColHead>E</ColHead>
            <ColHead $noRule />
          </ColHeads>

          <SheetRow $h={54} $bg={GREY}>
            <RowHead $on>1</RowHead><div />
            <Cell $v="flex-end" $pb={4} $pl={10} $b $s={21} $c="#fff">РАСЧЕТ</Cell>
            <div /><div />
            <Cell $v="flex-end" $pb={5} $pl={1} $b $s={10.7} $c="#f4f4f4">ОБЩАЯ СУММА НА КАЖДЫЙ МЕСЯЦ:</Cell>
            <div />
          </SheetRow>
          <SheetRow $h={52} $bg={GREY}>
            <RowHead>2</RowHead><div />
            <Cell $v="flex-end" $pb={2} $pl={5} $s={35.4} $c="#fff">расходов студента</Cell>
            <div /><div />
            <TotalBox>545,00 ₽</TotalBox>
            <BandCell><Band /></BandCell>
          </SheetRow>
          <SheetRow $h={19} $bg={GREY}><RowHead>3</RowHead></SheetRow>
          <SheetRow $h={38} $bg={YEL}>
            <RowHead>4</RowHead><div />
            <Cell $v="flex-start" $pt={3} $pl={33} $b $s={15.2} $c="#4a4a40">ОПИСАНИЕ СТАТЕЙ РАСХОДОВ</Cell>
            <div /><div />
            <Cell $v="flex-start" $pt={3} $side="flex-end" $pr={33} $b $s={15.4} $c="#4a4a40">СУММА</Cell>
            <div />
          </SheetRow>
          {items.map(([name, sum], i) => (
            <SheetRow key={name} $h={heights[i]} $bg={YEL}>
              <RowHead>{i + 5}</RowHead><div />
              <Cell $pl={13}>{name}</Cell>
              <div /><div />
              <Cell $side="flex-end" $pr={33} $s={10.5}>{sum}</Cell>
              <div />
            </SheetRow>
          ))}
          <SheetRow $h={34} $bg={YEL}>
            <RowHead>14</RowHead><div />
            <Cell $v="flex-start" $pl={13} $pt={2}>Стоянка</Cell>
            <div /><div />
            <Cell $v="flex-start" $side="flex-end" $pr={33} $pt={2} $s={10.5}>15,00 ₽</Cell>
            <div />
          </SheetRow>
          <SheetRow $h={34} $bg={GREY}>
            <RowHead>15</RowHead><div />
            <Cell $pl={13} $b $c="#f4f4f4">ОПИСАНИЕ</Cell>
            <Cell $side="flex-end" $pr={19} $b $s={11.5} $c="#f4f4f4">СУММА</Cell>
            <div />
            <Cell $side="center" $b $s={11.4} $c="#f4f4f4">ДОБАВИТЬ К ОБЩЕЙ СУММЕ?</Cell>
            <Cell $pl={13} $b $c="#f4f4f4">ПРИМЕЧАНИЯ</Cell>
          </SheetRow>
          <SheetRow $h={34} $bg={WHITE} $rule>
            <RowHead>16</RowHead><div />
            <Cell $pl={13} $s={11.6} $c={TXT}>Стирка одежды</Cell>
            <Cell $side="flex-end" $pr={19} $s={11.6} $c={TXT}>25,00 ₽</Cell>
            <div />
            <Cell $side="center" $s={11.4} $c={TXT}>НЕТ</Cell>
            <Cell $pl={13} $s={11.8} $c={TXT}>Отвезти к маме</Cell>
          </SheetRow>
          <SheetRow $h={34} $bg={WHITE}>
            <RowHead>17</RowHead><div />
            <Cell $pl={13} $c={TXT}>Питание (основная еда)</Cell>
            <Cell $side="flex-end" $pr={19} $s={11.6} $c={TXT}>85,00 ₽</Cell>
            <div />
            <Cell $side="center" $s={11.4} $c={TXT}>ДА</Cell>
            <div />
          </SheetRow>

          <Selection />
          <Tooltip>{tipLines.map((l) => <div key={l}>{l}</div>)}</Tooltip>
        </SheetArea>
        <VScroll>
          <ScrollBtn $h={13}><Tri d="u" /></ScrollBtn>
          <VThumb />
          <Fill />
          <ScrollBtn $h={11} style={{ marginBottom: 1 }}><Tri d="d" /></ScrollBtn>
        </VScroll>
      </Main>

      <SheetTabs>
        <Tri d="l" c="#999" />
        <Slot $w={15} />
        <Tri d="r" c="#999" />
        <SheetTab>Расчет расходов студента</SheetTab>
        <Slot $w={29} />
        <Plus />
        <Slot $w={193} />
        <Dots />
        <HScroll>
          <ScrollBtn $w={12}><Tri d="l" /></ScrollBtn>
          <HThumb />
          <Fill />
          <ScrollBtn $w={12}><Tri d="r" /></ScrollBtn>
        </HScroll>
      </SheetTabs>

      <StatusBar>
        <span>Готово</span>
        <Slot $w={15} $ml={16}><Access /></Slot>
        <span>Специальные возможности: все в порядке</span>
        <Fill />
        <ViewBtn $on><GridView /></ViewBtn>
        <ViewBtn><PageView /></ViewBtn>
        <ViewBtn><BreakView /></ViewBtn>
        <Zoom><Slot $w={14}>−</Slot><Track /><Slot $w={14}>+</Slot></Zoom>
        <Percent>100 %</Percent>
      </StatusBar>
    </Page>
  );
}
